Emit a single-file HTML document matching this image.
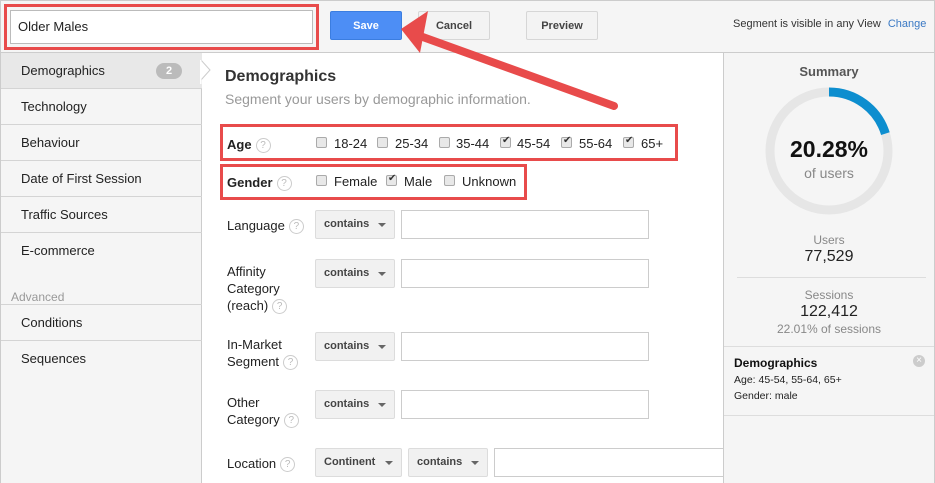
<!DOCTYPE html>
<html><head><meta charset="utf-8"><style>
*{box-sizing:border-box;margin:0;padding:0}
body{width:935px;height:483px;overflow:hidden;background:#fff;font-family:"Liberation Sans",Arial,sans-serif;position:relative;color:#222}
.a{position:absolute}
.top{left:0;top:0;width:935px;height:53px;background:#f5f5f5;border:1px solid #ccc;border-bottom:1px solid #ccc}
.btn{position:absolute;top:11px;height:29px;border:1px solid #d6d6d6;border-radius:2px;background:#f3f3f3;font-size:11px;font-weight:bold;color:#444;text-align:center;line-height:29px}
.side{left:0;top:53px;width:202px;height:430px;background:#f5f5f5;border-right:1px solid #ccc;border-left:1px solid #ccc}
.it{position:absolute;left:0;width:201px;height:36px;border-bottom:1px solid #d4d4d4;font-size:13px;line-height:35px;padding-left:20px;color:#222}
.right{left:723px;top:53px;width:212px;height:430px;background:#f5f5f5;border-left:1px solid #ccc;border-right:1px solid #ccc}
.lbl{position:absolute;left:227px;font-size:13px;color:#222;line-height:17px}
.q{display:inline-block;width:15px;height:15px;border:1px solid #ccc;border-radius:50%;font-size:10px;color:#bbb;text-align:center;line-height:13px;vertical-align:middle;margin-left:4px;font-weight:normal}
.sel{position:absolute;height:29px;border:1px solid #dcdcdc;border-radius:2px;background:#f1f1f1;font-size:11px;font-weight:bold;color:#444;line-height:26px;padding-left:8px}
.sel:after{content:"";position:absolute;right:8px;top:12px;border-left:4px solid transparent;border-right:4px solid transparent;border-top:4px solid #666}
.inp{position:absolute;height:29px;border:1px solid #ccc;background:#fff}
.cb{position:absolute;width:11px;height:11px;border:1px solid #aaa;border-radius:2px;background:#e8e8e8}
.cb.c:after{content:"✔";position:absolute;left:1px;top:-3px;font-size:10px;color:#333}
.ct{position:absolute;font-size:13px;color:#222}
.red{position:absolute;border:3px solid #e84b4b}
</style></head><body>
<div class="a top"></div>
<div class="a" style="left:10px;top:10px;width:303px;height:34px;background:#fff;border:1px solid #bbb;font-size:13px;line-height:32px;padding-left:7px">Older Males</div>
<div class="red" style="left:4px;top:4px;width:315px;height:46px"></div>
<div class="btn" style="left:330px;width:72px;background:#4d8ef5;border-color:#3b7de0;color:#fff">Save</div>
<div class="btn" style="left:418px;width:72px">Cancel</div>
<div class="btn" style="left:526px;width:72px">Preview</div>
<div class="a" style="left:733px;top:18px;font-size:11px;color:#333">Segment is visible in any View <span style="color:#3a79c4;margin-left:4px">Change</span></div>

<div class="a side">
<div class="it" style="top:0;background:#e8e8e8">Demographics<span class="a" style="left:155px;top:10px;width:26px;height:16px;border-radius:8px;background:#bbb;color:#fff;font-size:11px;font-weight:bold;text-align:center;line-height:16px">2</span></div>
<div class="it" style="top:36px">Technology</div>
<div class="it" style="top:72px">Behaviour</div>
<div class="it" style="top:108px">Date of First Session</div>
<div class="it" style="top:144px">Traffic Sources</div>
<div class="it" style="top:180px;border:none">E-commerce</div>
<div class="a" style="left:10px;top:237px;font-size:12px;color:#999">Advanced</div>
<div class="it" style="top:251px;border-top:1px solid #d4d4d4;height:37px">Conditions</div>
<div class="it" style="top:288px;border:none">Sequences</div>
</div>
<svg class="a" style="left:200px;top:60px" width="12" height="24"><path d="M1 0 L10 10 L1 20" fill="#fff" stroke="#ccc"/><rect x="0" y="0" width="1.5" height="24" fill="#fff"/></svg>

<div class="a" style="left:225px;top:68px;font-size:16px;font-weight:bold;color:#333">Demographics</div>
<div class="a" style="left:225px;top:91px;font-size:14px;color:#999">Segment your users by demographic information.</div>

<div class="lbl" style="top:136px;font-weight:bold">Age<span class="q">?</span></div>
<div class="cb" style="left:316px;top:137px"></div><div class="ct" style="left:334px;top:136px">18-24</div>
<div class="cb" style="left:377px;top:137px"></div><div class="ct" style="left:395px;top:136px">25-34</div>
<div class="cb" style="left:439px;top:137px"></div><div class="ct" style="left:456px;top:136px">35-44</div>
<div class="cb c" style="left:500px;top:137px"></div><div class="ct" style="left:517px;top:136px">45-54</div>
<div class="cb c" style="left:561px;top:137px"></div><div class="ct" style="left:579px;top:136px">55-64</div>
<div class="cb c" style="left:623px;top:137px"></div><div class="ct" style="left:641px;top:136px">65+</div>
<div class="red" style="left:220px;top:124px;width:458px;height:37px"></div>

<div class="lbl" style="top:174px;font-weight:bold">Gender<span class="q">?</span></div>
<div class="cb" style="left:316px;top:175px"></div><div class="ct" style="left:334px;top:174px">Female</div>
<div class="cb c" style="left:386px;top:175px"></div><div class="ct" style="left:404px;top:174px">Male</div>
<div class="cb" style="left:444px;top:175px"></div><div class="ct" style="left:462px;top:174px">Unknown</div>
<div class="red" style="left:220px;top:164px;width:307px;height:36px"></div>

<div class="lbl" style="top:217px">Language<span class="q">?</span></div>
<div class="sel" style="left:315px;top:210px;width:80px">contains</div><div class="inp" style="left:401px;top:210px;width:248px"></div>
<div class="lbl" style="top:263px">Affinity<br>Category<br>(reach)<span class="q">?</span></div>
<div class="sel" style="left:315px;top:259px;width:80px">contains</div><div class="inp" style="left:401px;top:259px;width:248px"></div>
<div class="lbl" style="top:336px">In-Market<br>Segment<span class="q">?</span></div>
<div class="sel" style="left:315px;top:332px;width:80px">contains</div><div class="inp" style="left:401px;top:332px;width:248px"></div>
<div class="lbl" style="top:394px">Other<br>Category<span class="q">?</span></div>
<div class="sel" style="left:315px;top:390px;width:80px">contains</div><div class="inp" style="left:401px;top:390px;width:248px"></div>
<div class="lbl" style="top:455px">Location<span class="q">?</span></div>
<div class="sel" style="left:315px;top:448px;width:87px">Continent</div>
<div class="sel" style="left:408px;top:448px;width:80px">contains</div>
<div class="inp" style="left:494px;top:448px;width:230px"></div>

<div class="a right">
<div class="a" style="left:0;top:11px;width:210px;text-align:center;font-size:13px;font-weight:bold;color:#555">Summary</div>
<svg class="a" style="left:40px;top:33px" width="130" height="130"><circle cx="65" cy="65" r="59" fill="none" stroke="#e6e6e6" stroke-width="9"/><circle cx="65" cy="65" r="59" fill="none" stroke="#0d8ecf" stroke-width="9" stroke-dasharray="75 400" transform="rotate(-90 65 65)"/></svg>
<div class="a" style="left:0;top:83px;width:210px;text-align:center;font-size:23px;font-weight:bold;color:#111">20.28%</div>
<div class="a" style="left:0;top:112px;width:210px;text-align:center;font-size:14px;color:#888">of users</div>
<div class="a" style="left:0;top:180px;width:210px;text-align:center;font-size:12px;color:#888">Users</div>
<div class="a" style="left:0;top:195px;width:210px;text-align:center;font-size:16px;color:#222">77,529</div>
<div class="a" style="left:13px;top:224px;width:189px;border-top:1px solid #ddd"></div>
<div class="a" style="left:0;top:235px;width:210px;text-align:center;font-size:12px;color:#888">Sessions</div>
<div class="a" style="left:0;top:250px;width:210px;text-align:center;font-size:16px;color:#222">122,412</div>
<div class="a" style="left:0;top:269px;width:210px;text-align:center;font-size:12px;color:#888">22.01% of sessions</div>
<div class="a" style="left:0;top:293px;width:210px;border-top:1px solid #ddd"></div>
<div class="a" style="left:10px;top:303px;font-size:12px;font-weight:bold;color:#111">Demographics</div>
<div class="a" style="left:10px;top:321px;font-size:10.5px;color:#222">Age: 45-54, 55-64, 65+</div>
<div class="a" style="left:10px;top:337px;font-size:10.5px;color:#222">Gender: male</div>
<div class="a" style="left:189px;top:302px;width:12px;height:12px;border-radius:50%;background:#ccc;color:#fff;font-size:10px;line-height:12px;text-align:center">×</div>
<div class="a" style="left:0;top:362px;width:210px;border-top:1px solid #ddd"></div>
</div>

<svg class="a" style="left:0;top:0" width="935" height="483"><line x1="614" y1="106" x2="420" y2="36" stroke="#e84b4b" stroke-width="8" stroke-linecap="round"/><polygon points="401,29 428,11 420,53" fill="#e84b4b"/></svg>
</body></html>
